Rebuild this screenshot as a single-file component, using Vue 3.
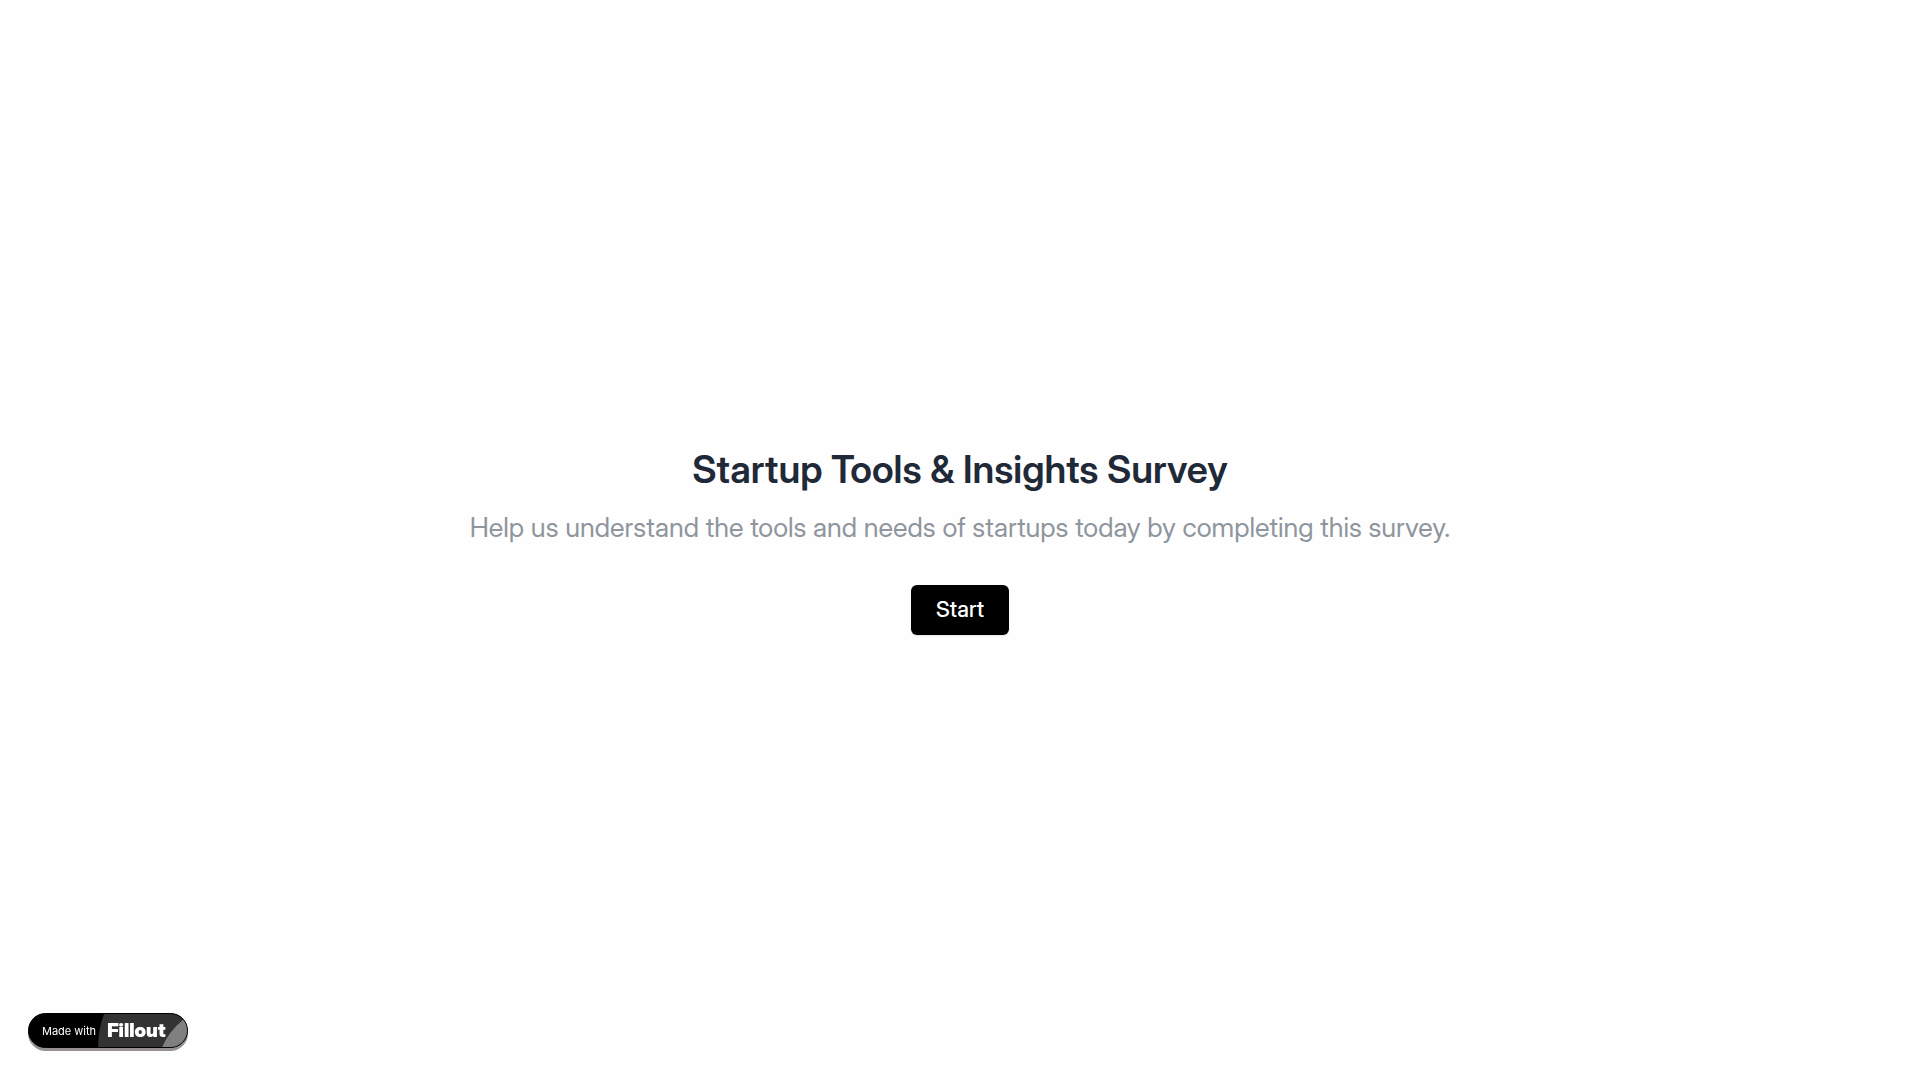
<script setup>
const title = 'Startup Tools & Insights Survey'
const subtitle = 'Help us understand the tools and needs of startups today by completing this survey.'
</script>

<template>
  <div class="page">
    <main class="cover">
      <h1 class="title">{{ title }}</h1>
      <p class="subtitle">{{ subtitle }}</p>
      <button type="button" class="start">Start</button>
    </main>
    <a href="#" class="badge">
      <svg class="badge-art" viewBox="0 0 160 35" preserveAspectRatio="none" aria-hidden="true">
        <path d="M76 0Q70 16 70 35H160V0Z" fill="#333" />
        <path d="M160 0V35H135Q141 19 156 6Z" fill="#7f8180" />
      </svg>
      <span class="made">Made with</span>
      <span class="brand">Fillout</span>
    </a>
  </div>
</template>

<style>
body {
  background: #fefefe;
}
</style>

<style scoped>
.page {
  position: relative;
  box-sizing: border-box;
  min-height: 100vh;
  display: flex;
  align-items: center;
  justify-content: center;
  font-family: "Inter Display", Inter, "Liberation Sans", sans-serif;
}
.cover {
  display: flex;
  flex-direction: column;
  align-items: center;
  padding: 0 24px;
  text-align: center;
}
.title {
  margin: 0 0 16px;
  font-size: 38px;
  line-height: 48px;
  font-weight: 600;
  color: #1f2937;
}
.subtitle {
  margin: 0 0 38px;
  font-size: 27px;
  line-height: 38px;
  font-weight: 400;
  color: #8f959d;
}
.start {
  height: 50px;
  padding: 0 25px 2px;
  border: 0;
  border-radius: 6px;
  background: #000;
  color: #fff;
  font-family: inherit;
  font-size: 22px;
  line-height: 32px;
  font-weight: 500;
  box-shadow: 0 1px 2px rgba(0, 0, 0, 0.1);
  cursor: pointer;
}
.badge {
  position: fixed;
  left: 28px;
  bottom: 32px;
  box-sizing: border-box;
  width: 160px;
  height: 35px;
  padding: 0 13px;
  display: flex;
  align-items: center;
  gap: 11px;
  border: 1px solid #000;
  border-radius: 18px;
  background: #000;
  box-shadow: 0 3px 0 #969195;
  color: #fff;
  text-decoration: none;
  white-space: nowrap;
}
.badge-art {
  position: absolute;
  inset: 0;
  width: 100%;
  height: 100%;
  border-radius: 17px;
}
.made,
.brand {
  position: relative;
}
.made {
  font-family: Inter, "Liberation Sans", sans-serif;
  font-size: 11px;
}
.brand {
  font-size: 19px;
  line-height: 24px;
  font-weight: 900;
}
</style>
